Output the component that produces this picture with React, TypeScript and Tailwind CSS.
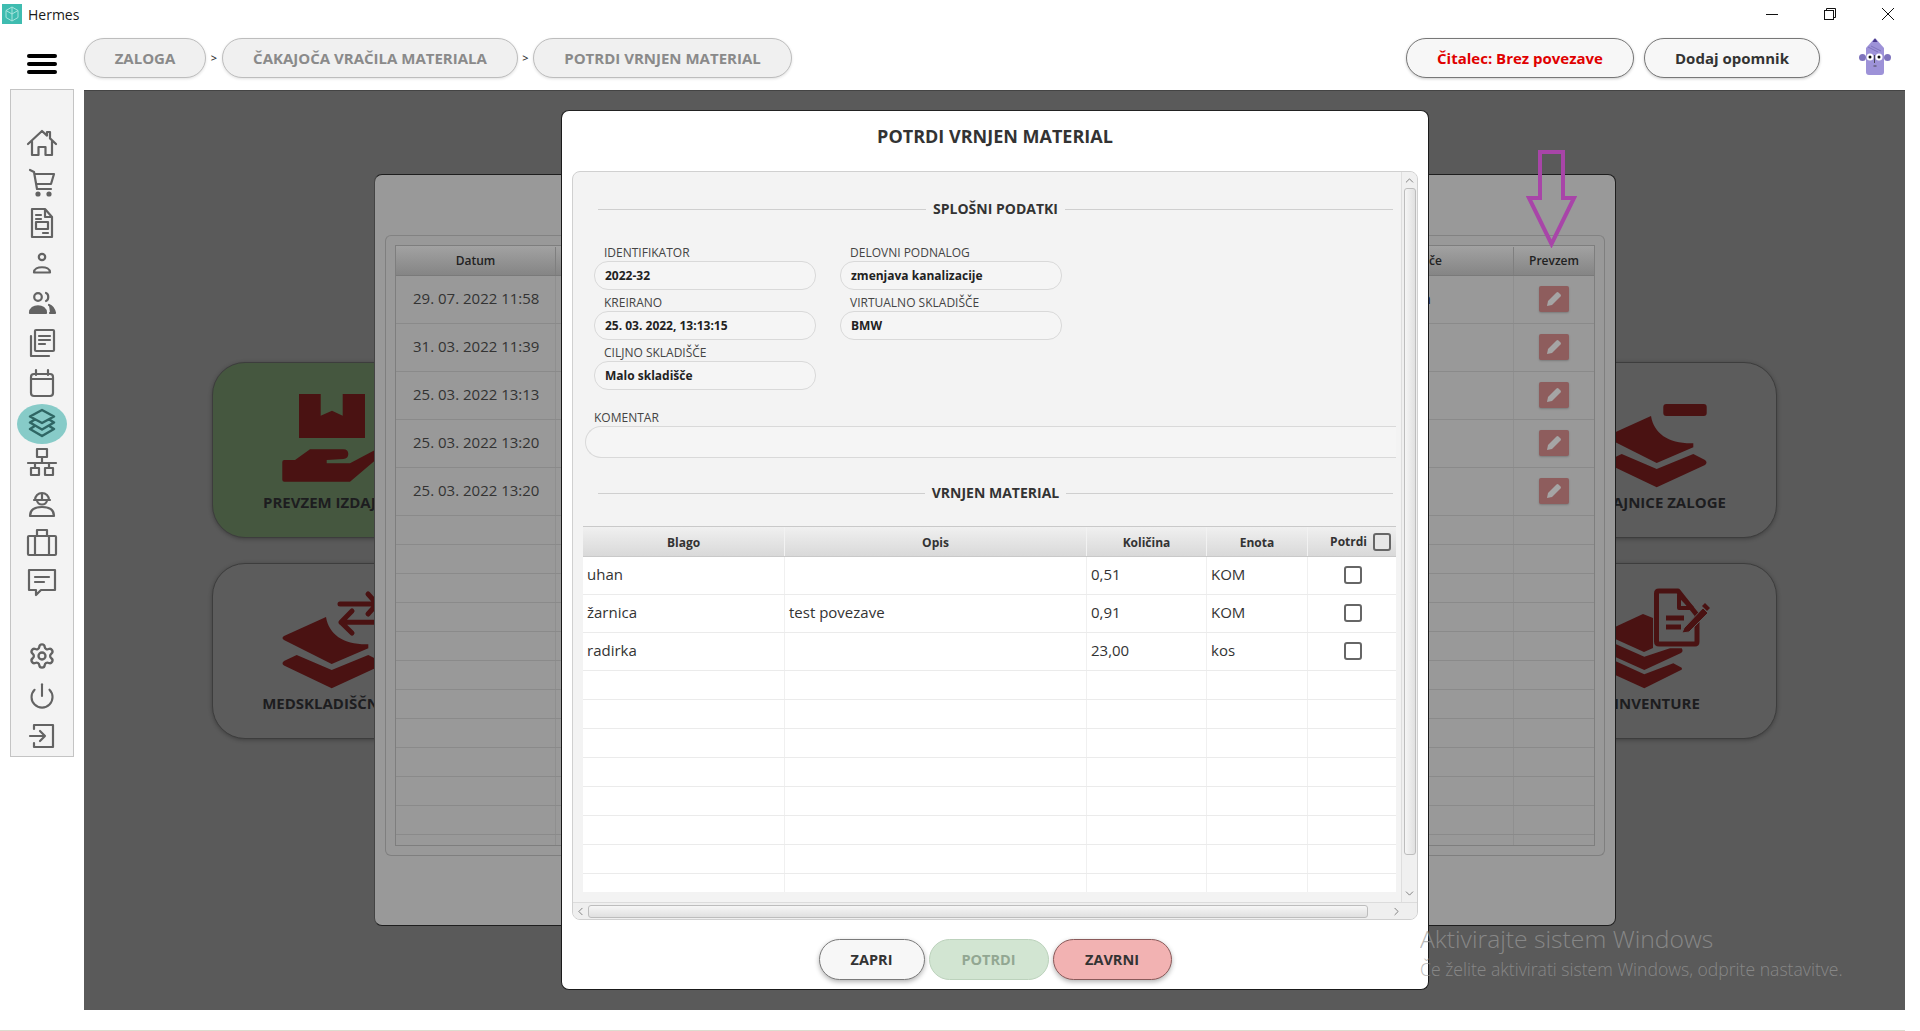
import React from "react";
import { ChevronUp, ChevronDown, ChevronLeft, ChevronRight, Settings, Power } from "lucide-react";

const red = "#4a1212";

function Ico({ children, color = "#636363", sw = "2.200" }: { children: React.ReactNode; color?: string; sw?: string }) {
  return (
    <svg width="32" height="32" viewBox="0 0 32 32" fill="none" stroke={color} strokeWidth={sw} strokeLinejoin="round" strokeLinecap="round">
      {children}
    </svg>
  );
}

const navTop: React.ReactNode[] = [
  <Ico><path d="M2 17 16 4l5 4.600V5h3v6.400L30 17M6 14.500V28h6.500v-8h7v8H26V14.500" /></Ico>,
  <Ico><path d="M4 3l4 2 3 17h14M8.500 7H28l-3 10H10.500" /><circle cx="12" cy="27" r="1.500" fill="#636363" /><circle cx="23" cy="27" r="1.500" fill="#636363" /></Ico>,
  <Ico><path d="M6 2h13l7 8v20H6zM19 2v8h7M10 8h5M10 12h5M10 15h12v7H10zM17 26h5" /></Ico>,
  <Ico><circle cx="16" cy="10" r="3.200" /><path d="M8 25.500c0-7 16-7 16 0z" /></Ico>,
  <Ico><circle cx="12" cy="10" r="3.800" /><path d="M20 6c3 1 3 7 0 8" /><path d="M4 26c0-9 16-9 16 0z" fill="#636363" /><path d="M23 18c3 1 5 4 6 8h-5" fill="#636363" /></Ico>,
  <Ico><path d="M5 9v20h18" /><rect x="9" y="3" width="19" height="21" rx="1" /><path d="M13 9h11M13 13h11M13 17h6" /></Ico>,
  <Ico><rect x="5" y="7" width="22" height="22" rx="3" /><path d="M5 12h22M10 3v5M22 3v5" /></Ico>,
];

const navMid: React.ReactNode[] = [
  <Ico><rect x="11" y="3" width="10" height="8" /><path d="M16 11v6M2 17h28" /><rect x="5" y="22" width="8" height="7" /><rect x="19" y="22" width="8" height="7" /><path d="M9 17v5M23 17v5" /></Ico>,
  <Ico><path d="M9 14a7 7 0 0 1 14 0zM16 7v7M8 14h16" /><path d="M11 14c0 6 10 6 10 0M4 30c0-8 7-9 12-9s12 1 12 9z" /></Ico>,
  <Ico><rect x="2" y="10" width="28" height="19" rx="1" /><path d="M11 10V4h10v6M9 10v19M23 10v19" /></Ico>,
  <Ico><path d="M3 4h26v20H15l-5 5v-5H3zM9 11h14M9 16h9" /></Ico>,
];

function Sidebar() {
  return (
    <div className="w-[64px] h-[668px] -mt-px ml-[10px] mr-[10px] shrink-0 bg-[#f3f3f3] border border-[#c4c4c4] flex flex-col items-center pt-[33px]">
      {navTop.map((n, i) => (
        <div key={i} className="h-[40px] w-full flex items-center justify-center">{n}</div>
      ))}
      <div className="h-[40px] w-[50px] mt-[1px] -mb-[1px] rounded-[50%] bg-[#87cbc8] flex items-center justify-center">
        <Ico color="#2f6664" sw="2.500">
          <path d="M16 2 28 8.500 16 15 4 8.500zM8 12l-4 2.500 12 7 12-7-4-2.500M8 18.500 4 21l12 7 12-7-4-2.500" />
        </Ico>
      </div>
      {navMid.map((n, i) => (
        <div key={i} className="h-[40px] w-full flex items-center justify-center">{n}</div>
      ))}
      <div className="h-[34px] shrink-0" />
      <div className="h-[40px] w-full flex items-center justify-center">
        <Settings size={28} color="#636363" strokeWidth={2} />
      </div>
      <div className="h-[40px] w-full flex items-center justify-center">
        <Power size={28} color="#636363" strokeWidth={1.800} />
      </div>
      <div className="h-[40px] w-full flex items-center justify-center">
        <Ico><path d="M8 9V5h19v22H8v-4M4 16h15M14 11l5 5-5 5" /></Ico>
      </div>
    </div>
  );
}

function Layers() {
  return (
    <g fill={red}>
      <path d="M57 26 15 45q-3 2 0 4l47.700 24L99.300 57.300V53.300C75 54 60 44 57 26z" />
      <path d="M27.700 64 15 70q-3 2.300 0 4.500l47.700 22.800L111 75q3-2.700 0-5l-11.700-6L62.700 79z" />
    </g>
  );
}

function IconReceive() {
  return (
    <g fill={red}>
      <path d="M30 4h21.700v21.700L63 20.700l10.700 5V4H96v44H30z" />
      <path d="M13.300 72q0-2 2-2H26l15-10.700h33.300q5 0 5 4.700t-5 5l-16.600 1v3.300H81L106 60l10 2-35 29.700H15.300q-2 0-2-2z" />
    </g>
  );
}

function IconTransfer() {
  return (
    <>
      <Layers />
      <g stroke={red} strokeWidth="5" strokeLinecap="round" strokeLinejoin="round" fill="none">
        <path d="M71 13h37M99 3l9 10-9 10M115 31.300H72M83 20 72 31.300 83 42" />
      </g>
    </>
  );
}

function IconMinus() {
  return (
    <>
      <Layers />
      <rect x="69.300" y="14" width="43.400" height="12" rx="3" fill={red} />
    </>
  );
}

function IconInventory() {
  return (
    <>
      <g fill={red}>
        <path d="M49 23 8 42l42 19 9-4V27z" />
        <path d="M8 47l42.300 18.700L76 57.300h11.700q2 3-.7 4.700L50.300 79 8 60z" />
        <path d="M8 64l42.300 19.300 29-11 8.400 4.400q1 2-.7 2.300L50.300 97.300 8 78z" />
      </g>
      <g fill="none" stroke={red} strokeLinejoin="round">
        <path d="M78 0H65q-2.500 0-2.500 2.500v48q0 2.500 2.500 2.500h36q2 0 2-2.500V24L84 0z" strokeWidth="5" fill="#5c5c5c" />
        <path d="M85 4v13h13z" strokeWidth="4" />
        <path d="M72 27h18M72 36h15" strokeWidth="5" />
      </g>
      <path d="M90 37 109 17l5 5-19 19-7 1z" fill={red} stroke="#5c5c5c" strokeWidth="1" />
      <path d="M108 15l3-3 5 5-3 3z" fill={red} />
    </>
  );
}

function Card({ label, icon, green, labelCls = "" }: { label: string; icon: React.ReactNode; green?: boolean; labelCls?: string }) {
  return (
    <div className={`w-[240px] h-[176px] rounded-[33px] border border-[#3d3d3d] shadow-[0_1px_4px_rgba(0,0,0,0.3)] flex flex-col items-center pt-[27px] ${green ? "bg-[#45573f]" : "bg-[#5c5c5c]"}`}>
      <svg width="126" height="100" viewBox="0 0 126 100" className="overflow-visible shrink-0">{icon}</svg>
      <div className={`mt-[2px] h-[20px] text-[15px] leading-[20px] font-bold text-[#1d1d1f] whitespace-nowrap ${labelCls}`}>{label}</div>
    </div>
  );
}

const pencil = (
  <svg width="16" height="16" viewBox="0 0 16 16" fill="#a5a5a5">
    <path d="M1 15l1-5L10.500 1.500q1-1 2 0l2 2q1 1 0 2L6 14z" />
  </svg>
);

const panelDates = ["29. 07. 2022 11:58", "31. 03. 2022 11:39", "25. 03. 2022 13:13", "25. 03. 2022 13:20", "25. 03. 2022 13:20"];

function BackPanel() {
  return (
    <div className="absolute left-[290px] top-[83px] w-[1242px] h-[752px] bg-[#999999] rounded-[8px] border border-[#1e1e1e] border-l-[#444444] pt-[60px] px-[10px]">
      <div className="h-[621px] rounded-[6px] border border-[#7f7f7f] border-t-[#828282] p-[9px]">
        <div className="h-[601px] border border-[#7e7e7e] overflow-hidden">
          <div className="h-[30px] pt-[1px] grid grid-cols-[160px_1fr_80px] bg-gradient-to-b from-[#a2a2a2] to-[#858585] border-b border-[#7a7a7a] text-[12px] font-semibold text-[#222222]">
            <div className="flex items-center justify-center border-r border-[#7f7f7f]">Datum</div>
            <div className="flex items-center justify-end pr-[71px] border-r border-[#7f7f7f]">Skladišče</div>
            <div className="flex items-center justify-center">Prevzem</div>
          </div>
          {panelDates.map((d, i) => (
            <div key={i} className="h-[48px] grid grid-cols-[160px_1fr_80px] border-b border-[#8a8a8a] text-[15px] text-[#333333]">
              <div className="flex items-center pl-[17px] pb-[2px] border-r border-[#8f8f8f]">{d}</div>
              <div className="flex items-center justify-end pr-[82px] pb-[2px] border-r border-[#8f8f8f] text-[#1c1c3a]">{i === 0 ? "n" : ""}</div>
              <div className="flex items-center justify-center pb-[1px]">
                <div className="w-[30px] h-[26px] rounded-[2px] bg-[#8e5d5d] shadow-[0_1px_2px_rgba(0,0,0,0.2)] flex items-center justify-center">{pencil}</div>
              </div>
            </div>
          ))}
          {Array.from({ length: 12 }).map((_, i) => (
            <div key={i} className="h-[29px] grid grid-cols-[160px_1fr_80px] border-b border-[#8a8a8a]">
              <div className="border-r border-[#8f8f8f]" />
              <div className="border-r border-[#8f8f8f]" />
              <div />
            </div>
          ))}
        </div>
      </div>
    </div>
  );
}

function Heading({ text, w }: { text: string; w: string }) {
  return (
    <div className="h-[16px] ml-[25px] mr-[8px] flex items-center gap-[6px] shrink-0">
      <div className="flex-1 h-px bg-[#cfcfcf]" />
      <div className={`${w} text-center text-[14px] leading-[16px] font-bold text-[#333333] whitespace-nowrap`}>{text}</div>
      <div className="flex-1 h-px bg-[#cfcfcf]" />
    </div>
  );
}

function Field({ label, value }: { label: string; value: string }) {
  return (
    <div className="w-[222px] flex flex-col">
      <div className="h-[17px] pl-[10px] text-[12px] leading-[18px] text-[#444444] whitespace-nowrap">{label}</div>
      <div className="h-[29px] rounded-[14px] bg-[#f5f5f5] border border-[#d9d9d9] pl-[10px] flex items-center text-[12px] font-bold text-[#222222] whitespace-nowrap">{value}</div>
    </div>
  );
}

const rows = [
  ["uhan", "", "0,51", "KOM"],
  ["žarnica", "test povezave", "0,91", "KOM"],
  ["radirka", "", "23,00", "kos"],
];

function Check() {
  return <div className="w-[18px] h-[18px] rounded-[3px] border-2 border-[#666666] bg-white shrink-0" />;
}

function ItemTable() {
  const cols = "grid grid-cols-[202px_302px_120px_101px_89px]";
  return (
    <div className="ml-[10px] mr-[5px] mt-[25px] h-[366px] bg-white overflow-hidden shrink-0">
      <div className={`${cols} h-[31px] bg-gradient-to-b from-[#f0f0f0] to-[#d9d9d9] border-t border-b border-[#c9c9c9] text-[12px] font-bold text-[#333333]`}>
        <div className="flex items-center justify-center pt-[2px] border-r border-[#f2f2f2]">Blago</div>
        <div className="flex items-center justify-center pt-[2px] border-r border-[#f2f2f2]">Opis</div>
        <div className="flex items-center justify-center pt-[2px] border-r border-[#f2f2f2]">Količina</div>
        <div className="flex items-center justify-center pt-[2px] border-r border-[#f2f2f2]">Enota</div>
        <div className="flex items-center justify-end gap-[6px] pr-[6px] pt-[1px]">
          <span>Potrdi</span>
          <div className="w-[18px] h-[18px] rounded-[3px] border-2 border-[#666666] bg-[#e6e6e6]" />
        </div>
      </div>
      {rows.map((r, i) => (
        <div key={i} className={`${cols} h-[38px] border-b border-[#ebebeb] text-[15px] text-[#333333]`}>
          {r.map((c, j) => (
            <div key={j} className="flex items-center px-[4px] pb-[2px] border-r border-[#f0f0f0]">{c}</div>
          ))}
          <div className="flex items-center pl-[36px] pb-[2px]"><Check /></div>
        </div>
      ))}
      {Array.from({ length: 9 }).map((_, i) => (
        <div key={i} className={`${cols} h-[29px] border-b border-[#ebebeb]`}>
          <div className="border-r border-[#f0f0f0]" />
          <div className="border-r border-[#f0f0f0]" />
          <div className="border-r border-[#f0f0f0]" />
          <div className="border-r border-[#f0f0f0]" />
          <div />
        </div>
      ))}
    </div>
  );
}

function Modal() {
  return (
    <div className="absolute left-[477px] top-[19px] w-[868px] h-[880px] bg-white rounded-[8px] border border-[#1a1a1a] border-t-[#222222] flex flex-col">
      <div className="h-[60px] shrink-0 pb-[10px] flex items-center justify-center text-[18px] font-bold text-[#333333]">POTRDI VRNJEN MATERIAL</div>
      <div className="mx-[10px] h-[749px] shrink-0 rounded-[8px] bg-[#f3f3f3] border border-[#d0d0d0] flex flex-col overflow-hidden">
        <div className="flex-1 flex min-h-0">
          <div className="flex-1 min-w-0 flex flex-col pt-[29px]">
            <Heading text="SPLOŠNI PODATKI" w="w-[127px]" />
            <div className="ml-[21px] mt-[27px] flex gap-[24px] h-[147px] shrink-0">
              <div className="flex flex-col gap-[4px]">
                <Field label="IDENTIFIKATOR" value="2022-32" />
                <Field label="KREIRANO" value="25. 03. 2022, 13:13:15" />
                <Field label="CILJNO SKLADIŠČE" value="Malo skladišče" />
              </div>
              <div className="flex flex-col gap-[4px]">
                <Field label="DELOVNI PODNALOG" value="zmenjava kanalizacije" />
                <Field label="VIRTUALNO SKLADIŠČE" value="BMW" />
              </div>
            </div>
            <div className="ml-[21px] mt-[18px] h-[17px] text-[12px] leading-[17px] text-[#444444] shrink-0">KOMENTAR</div>
            <div className="ml-[12px] mr-[5px] h-[32px] rounded-l-[16px] border border-r-0 border-[#d9d9d9] bg-[#f5f5f5] shrink-0" />
            <div className="mt-[27px]">
              <Heading text="VRNJEN MATERIAL" w="w-[129px]" />
            </div>
            <ItemTable />
          </div>
          <div className="w-[16px] shrink-0 bg-[#f0f0f0] border-l border-[#dedede] flex flex-col items-center pt-[2px] pb-[2px]">
            <ChevronUp size={13} color="#555555" strokeWidth={1.300} />
            <div className="w-[12px] h-[667px] mt-[1px] rounded-[3px] bg-gradient-to-r from-[#f6f6f6] to-[#e0e0e0] border border-[#bdbdbd] shrink-0" />
            <div className="flex-1" />
            <ChevronDown size={13} color="#555555" strokeWidth={1.300} />
          </div>
        </div>
        <div className="h-[17px] shrink-0 bg-[#efefef] border-t border-[#dcdcdc] flex items-center pl-[1px] pr-[14px]">
          <ChevronLeft size={13} color="#555555" strokeWidth={1.300} />
          <div className="w-[780px] ml-[1px] h-[13px] rounded-[3px] bg-gradient-to-b from-[#f6f6f6] to-[#e0e0e0] border border-[#bdbdbd]" />
          <div className="flex-1" />
          <ChevronRight size={13} color="#555555" strokeWidth={1.300} />
        </div>
      </div>
      <div className="flex justify-center gap-[4px] pt-[19px]">
        <div className="w-[106px] h-[41px] rounded-full bg-[#f7f7f7] border border-[#7a7a7a] shadow-[0_2px_5px_rgba(0,0,0,0.3)] flex items-center justify-center text-[14.500px] font-bold text-[#333333]">ZAPRI</div>
        <div className="w-[120px] h-[41px] rounded-full bg-[#d2e5d2] border border-[#bcd2bc] flex items-center justify-center text-[14.500px] font-bold text-[#92a792]">POTRDI</div>
        <div className="w-[119px] h-[41px] rounded-full bg-[#f2b2b2] border border-[#8a5a5a] shadow-[0_2px_5px_rgba(0,0,0,0.3)] flex items-center justify-center text-[14.500px] font-bold text-[#333333]">ZAVRNI</div>
      </div>
    </div>
  );
}

function Crumb({ w, text }: { w: string; text: string }) {
  return (
    <div className={`${w} h-[40px] pt-[1px] rounded-full bg-[#f0f0f0] border border-[#bdbdbd] shadow-[0_1px_3px_rgba(0,0,0,0.12)] flex items-center justify-center text-[15px] font-bold text-[#8a8a8a] whitespace-nowrap`}>{text}</div>
  );
}

function Avatar() {
  return (
    <svg width="32" height="38" viewBox="0 0 32 38">
      <circle cx="3.500" cy="19.500" r="3.500" fill="#7f74bd" />
      <circle cx="28.500" cy="19.500" r="3.500" fill="#7f74bd" />
      <path d="M7 10 15 1h2l8 9v24q0 3-3 3H10q-3 0-3-3z" fill="#9d92d8" />
      <path d="M13.500 4l2.500-4 2.500 4z" fill="#4a3a8c" />
      <path d="M9 9l10 5M12 8l10 5" stroke="#7f74bd" strokeWidth="1" fill="none" />
      <circle cx="11" cy="19" r="3.500" fill="#ffffff" />
      <circle cx="20" cy="19" r="3.500" fill="#ffffff" />
      <circle cx="11" cy="19" r="1.500" fill="#111111" />
      <circle cx="20" cy="19" r="1.500" fill="#111111" />
      <path d="M15.500 17v8M14.500 28h3" stroke="#333333" strokeWidth="0.800" fill="none" />
    </svg>
  );
}

export default function App() {
  return (
    <div className="w-[1920px] h-[1031px] bg-white overflow-hidden flex flex-col font-['Open_Sans',sans-serif]">
      <div className="h-[28px] flex items-center shrink-0">
        <svg width="20" height="20" viewBox="0 0 20 20" className="ml-[2px] -mt-[1px]">
          <rect width="20" height="20" fill="#3fbcb0" />
          <path d="M10 3l6 3.500v7L10 17l-6-3.500v-7zM10 3v14M4 6.500l6 3.500 6-3.500" fill="none" stroke="#a8e4dd" strokeWidth="1" />
        </svg>
        <div className="ml-[6px] pt-[1px] text-[14px] text-[#1a1a1a]">Hermes</div>
        <div className="flex-1" />
        <div className="flex pr-[3px] h-[28px]">
          <div className="w-[58px] flex items-center justify-center">
            <div className="w-[12px] h-px bg-[#111111]" />
          </div>
          <div className="w-[58px] flex items-center justify-center">
            <svg width="12" height="12" viewBox="0 0 12 12" fill="none" stroke="#111111" strokeWidth="1">
              <rect x="0.500" y="2.500" width="9" height="9" />
              <path d="M2.500 2.500v-2h9v9h-2" />
            </svg>
          </div>
          <div className="w-[58px] flex items-center justify-center">
            <svg width="12" height="12" viewBox="0 0 12 12" fill="none" stroke="#111111" strokeWidth="1">
              <path d="M0 0l12 12M12 0 0 12" />
            </svg>
          </div>
        </div>
      </div>

      <div className="h-[62px] shrink-0 flex items-start pt-[10px]">
        <div className="w-[84px] h-[40px] pl-[27px] pt-[16px] shrink-0">
          <div className="w-[30px] flex flex-col gap-[4px]">
            <div className="h-[4px] rounded-full bg-black" />
            <div className="h-[4px] rounded-full bg-black" />
            <div className="h-[4px] rounded-full bg-black" />
          </div>
        </div>
        <Crumb w="w-[122px]" text="ZALOGA" />
        <div className="w-[16px] h-[40px] flex items-center justify-center text-[11px] font-semibold text-[#333333]">&gt;</div>
        <Crumb w="w-[296px]" text="ČAKAJOČA VRAČILA MATERIALA" />
        <div className="w-[15px] h-[40px] flex items-center justify-center text-[11px] font-semibold text-[#333333]">&gt;</div>
        <Crumb w="w-[259px]" text="POTRDI VRNJEN MATERIAL" />
        <div className="flex-1" />
        <div className="w-[228px] h-[40px] pt-[1px] rounded-full bg-[#f7f7f7] border border-[#777777] shadow-[0_1px_3px_rgba(0,0,0,0.2)] flex items-center justify-center text-[15px] font-bold text-[#e00000]">Čitalec: Brez povezave</div>
        <div className="ml-[10px] w-[176px] h-[40px] pt-[1px] rounded-full bg-[#f7f7f7] border border-[#777777] shadow-[0_1px_3px_rgba(0,0,0,0.2)] flex items-center justify-center text-[15px] font-bold text-[#333333]">Dodaj opomnik</div>
        <div className="ml-[39px] mr-[29px]"><Avatar /></div>
      </div>

      <div className="h-[920px] shrink-0 flex">
        <Sidebar />
        <div className="relative w-[1821px] h-[920px] shrink-0 bg-[#5a5a5a] border-t border-[#444444] overflow-hidden">
          <div className="pt-[271px] px-[128px] flex flex-col gap-[25px]">
            <div className="flex justify-between">
              <Card green label="PREVZEM IZDAJNICE" labelCls="w-[138px]" icon={<IconReceive />} />
              <Card label="IZDAJNICE ZALOGE" icon={<IconMinus />} />
            </div>
            <div className="flex justify-between">
              <Card label="MEDSKLADIŠČNICE" icon={<IconTransfer />} />
              <Card label="INVENTURE" icon={<IconInventory />} />
            </div>
          </div>
          <BackPanel />
          <svg width="51" height="98" viewBox="0 0 51 98" className="absolute left-[1442px] top-[59px]" fill="none" stroke="#a845a8" strokeWidth="4" strokeLinejoin="miter">
            <path d="M14 2h23v46h11L25.500 94 3 48h11z" />
          </svg>
          <Modal />
          <div className="absolute left-[1336px] top-[832px] opacity-70 text-[#9a9a9a] font-light pointer-events-none whitespace-nowrap">
            <div className="text-[24.700px] leading-[32px]">Aktivirajte sistem Windows</div>
            <div className="text-[17.600px] leading-[24px] mt-[2px]">Če želite aktivirati sistem Windows, odprite nastavitve.</div>
          </div>
        </div>
      </div>
      <div className="flex-1" />
      <div className="h-px w-[1905px] bg-[#dcdccf] shrink-0" />
    </div>
  );
}
